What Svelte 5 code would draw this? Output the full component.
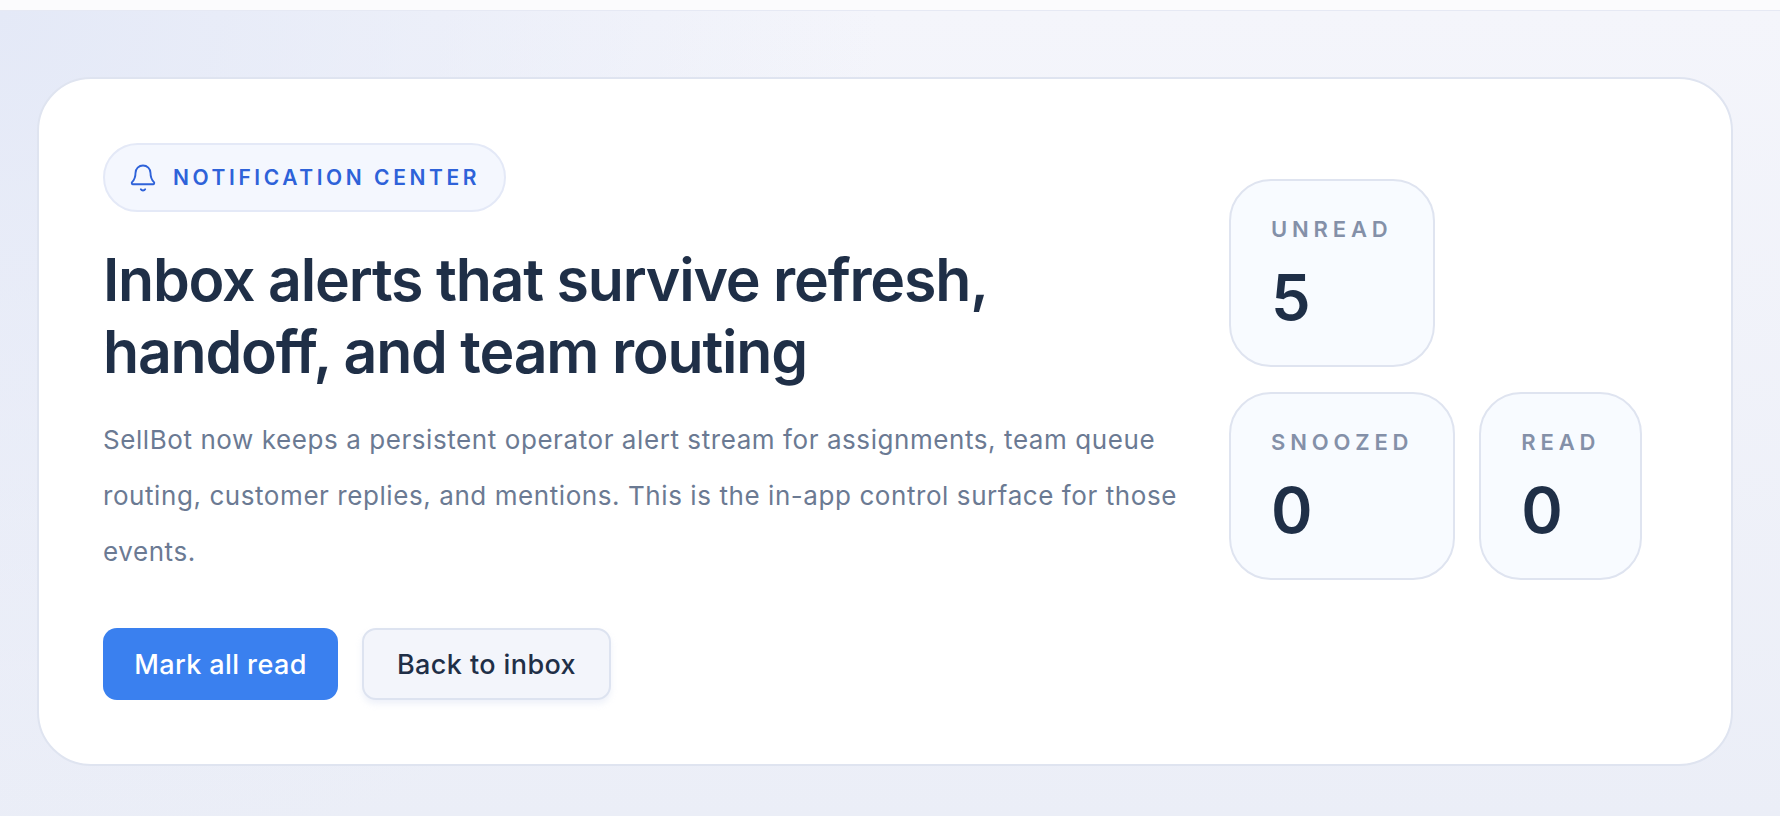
<script>
	const topStats = [{ label: 'UNREAD', value: 5 }];
	const bottomStats = [
		{ label: 'SNOOZED', value: 0 },
		{ label: 'READ', value: 0 }
	];
</script>

<div class="page">
	<div class="topbar"></div>
	<main class="content">
		<section class="card">
			<div class="intro">
				<div class="pill">
					<svg class="bell" viewBox="0 0 24 24" fill="none" stroke="currentColor" stroke-linecap="round" stroke-linejoin="round">
						<path d="M10.268 21a2 2 0 0 0 3.464 0" />
						<path d="M3.262 15.326A1 1 0 0 0 4 17h16a1 1 0 0 0 .74-1.673C19.41 13.956 18 12.499 18 8A6 6 0 0 0 6 8c0 4.499-1.411 5.956-2.738 7.326" />
					</svg>
					<span>NOTIFICATION CENTER</span>
				</div>
				<h1>Inbox alerts that survive refresh,<br />handoff, and team routing</h1>
				<p class="lead">
					SellBot now keeps a persistent operator alert stream for assignments, team queue routing, customer replies, and mentions. This is the in-app control surface for those events.
				</p>
				<div class="actions">
					<button class="primary">Mark all read</button>
					<button class="secondary">Back to inbox</button>
				</div>
			</div>
			<div class="stats">
				<div class="row">
					{#each topStats as stat}
						<div class="stat">
							<div class="label">{stat.label}</div>
							<div class="value">{stat.value}</div>
						</div>
					{/each}
				</div>
				<div class="row">
					{#each bottomStats as stat}
						<div class="stat">
							<div class="label">{stat.label}</div>
							<div class="value">{stat.value}</div>
						</div>
					{/each}
				</div>
			</div>
		</section>
	</main>
</div>

<style>
	:global(body) {
		margin: 0;
		font-family: Inter, 'Liberation Sans', sans-serif;
	}

	.page {
		height: 816px;
		overflow: hidden;
		display: flex;
		flex-direction: column;
		background: #fff;
	}

	.topbar {
		height: 10px;
		flex: none;
		background: #fbfbfd;
		border-bottom: 1px solid #e6e9f4;
	}

	.content {
		flex: 1;
		padding: 66px 47px 0 37px;
		background:
			radial-gradient(circle at 0 0, #e4e9f7 0%, rgba(228, 233, 247, 0) 45%),
			linear-gradient(180deg, #f4f5fb 0%, #ebeef7 100%);
	}

	.card {
		box-sizing: border-box;
		height: 689px;
		padding: 64px 78px 0 64px;
		display: flex;
		justify-content: space-between;
		background: #fff;
		border: 2px solid #dfe4f0;
		border-radius: 54px;
	}

	.pill {
		box-sizing: border-box;
		width: 403px;
		height: 69px;
		display: flex;
		align-items: center;
		gap: 15px;
		padding-left: 23px;
		color: #2e62d9;
		background: #f4f7fe;
		border: 2px solid #e4e9f7;
		border-radius: 35px;
		font-size: 21px;
		font-weight: 600;
		letter-spacing: 0.17em;
	}

	.bell {
		width: 30px;
		height: 30px;
		flex: none;
		stroke-width: 1.5;
	}

	h1 {
		margin: 32px 0 0;
		color: #1f2f47;
		font-size: 59px;
		line-height: 72px;
		font-weight: 600;
		letter-spacing: -0.0205em;
	}

	.lead {
		width: 1085px;
		margin: 24px 0 0;
		color: #6b7a93;
		font-size: 26px;
		line-height: 56px;
		letter-spacing: 0.022em;
	}

	.actions {
		display: flex;
		gap: 24px;
		margin-top: 48px;
	}

	button {
		box-sizing: border-box;
		height: 72px;
		font-family: inherit;
		font-size: 27px;
		font-weight: 500;
		letter-spacing: 0.015em;
		border-radius: 14px;
	}

	.primary {
		width: 235px;
		color: #fff;
		background: #3a80ef;
		border: none;
	}

	.secondary {
		width: 249px;
		color: #1f2f47;
		background: #f3f5fb;
		border: 2px solid #dde3f0;
		box-shadow: 0 4px 6px rgba(200, 210, 235, 0.3);
	}

	.stats {
		display: flex;
		flex-direction: column;
		gap: 25px;
		margin-top: 36px;
		width: 424px;
	}

	.row {
		display: flex;
		gap: 24px;
	}

	.stat {
		box-sizing: border-box;
		height: 188px;
		padding: 35px 40px 0;
		background: #f8fbff;
		border: 2px solid #dfe4f0;
		border-radius: 42px;
	}

	.label {
		color: #8490a8;
		font-size: 22px;
		font-weight: 600;
		letter-spacing: 0.22em;
	}

	.value {
		margin-top: 19px;
		color: #1f2f47;
		font-size: 63px;
		line-height: 72px;
		font-weight: 600;
	}
</style>
